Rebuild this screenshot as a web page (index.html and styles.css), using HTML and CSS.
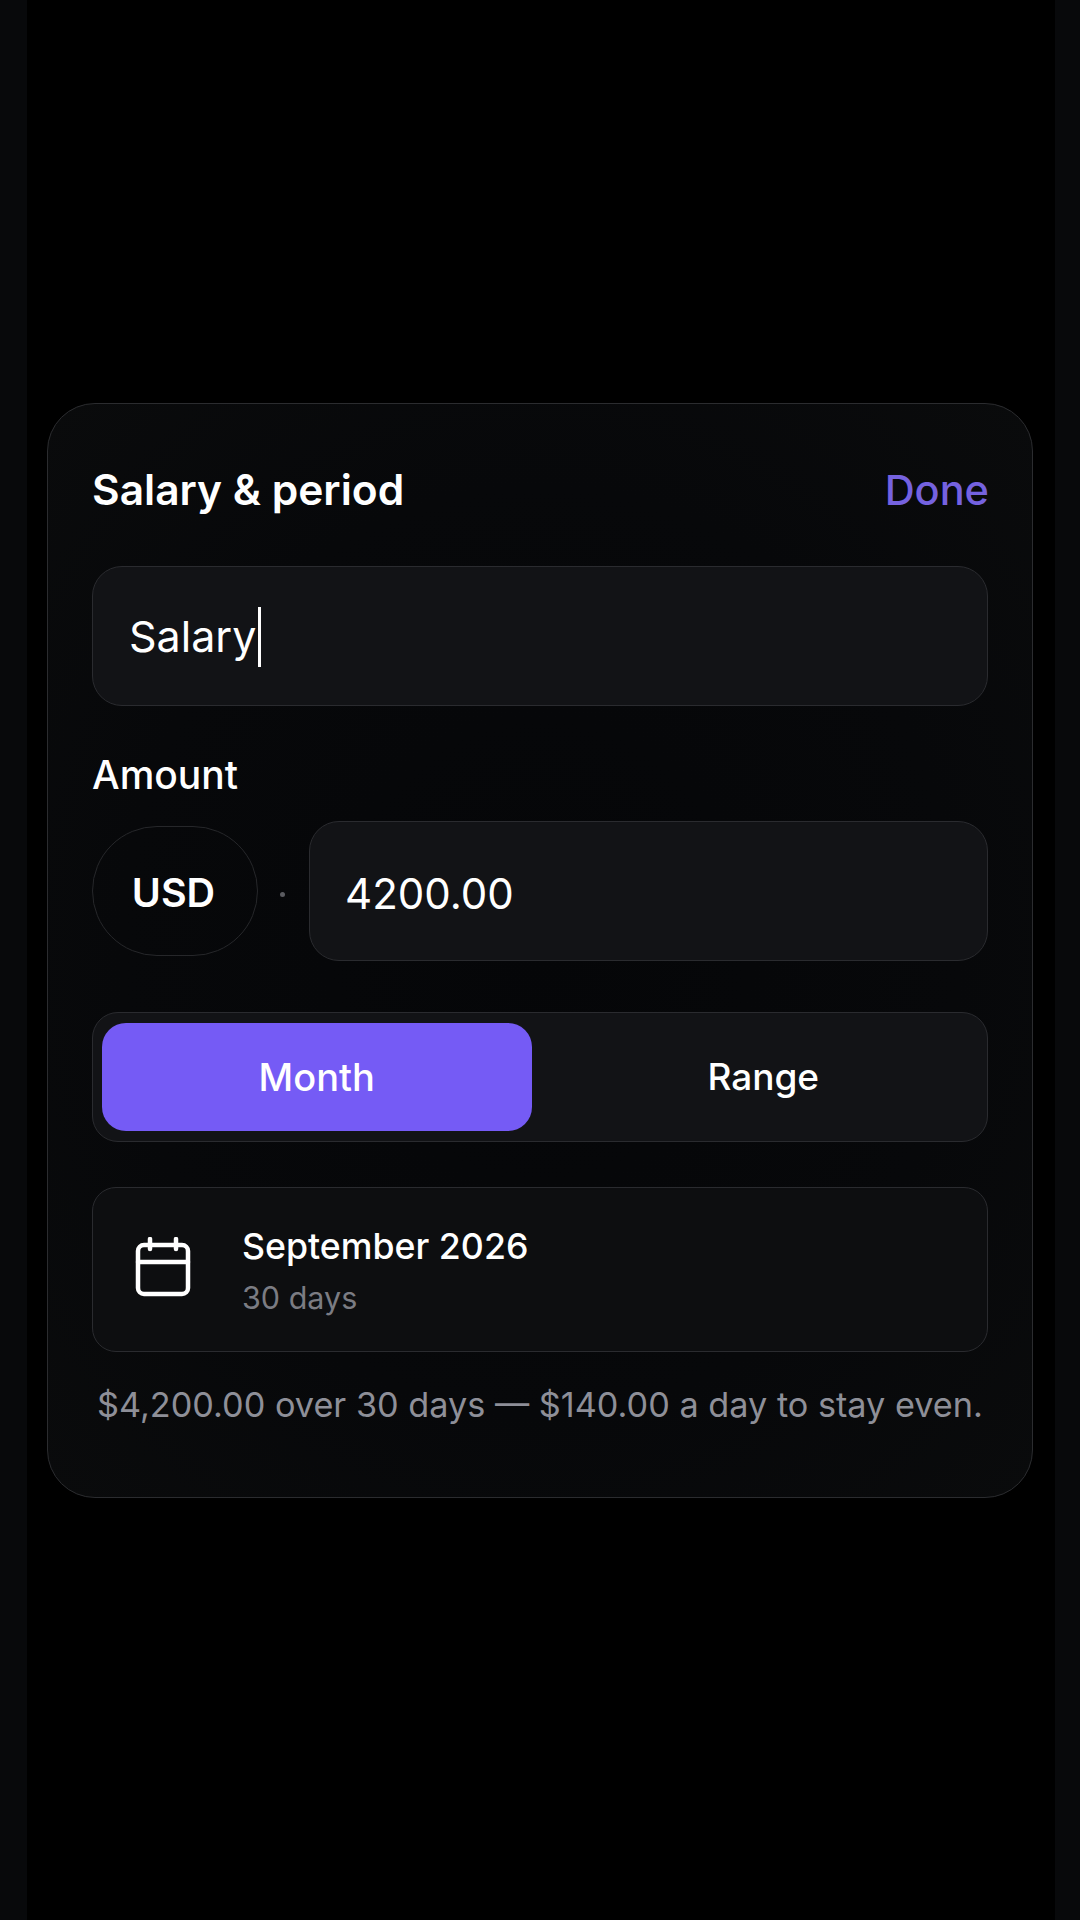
FILE: index.html
```html
<!DOCTYPE html>
<html lang="en">
<head>
    <meta charset="UTF-8">
    <meta name="viewport" content="width=device-width, initial-scale=1.0">
    <title>Salary &amp; period</title>
    <link rel="stylesheet" href="styles.css">
</head>
<body>
    <div class="scrim">
        <div class="sheet">
            <div class="sheet-head">
                <h1 class="sheet-title">Salary &amp; period</h1>
                <span class="done">Done</span>
            </div>

            <div class="field name-field">
                <span>Salary</span><span class="caret"></span>
            </div>

            <div class="amount-label">Amount</div>
            <div class="amount-row">
                <div class="currency">USD</div>
                <span class="dot"></span>
                <div class="field amount-field">4200.00</div>
            </div>

            <div class="segment">
                <div class="seg-item active">Month</div>
                <div class="seg-item range">Range</div>
            </div>

            <div class="period">
                <svg class="cal-icon" viewBox="0 0 56 60" fill="none" stroke="#fff" stroke-width="4.5" stroke-linecap="round" stroke-linejoin="round">
                    <rect x="3" y="8" width="50" height="49" rx="6"/>
                    <path d="M3 25H53"/>
                    <path d="M15 2V12"/>
                    <path d="M41 2V12"/>
                </svg>
                <div class="period-text">
                    <div class="period-name">September 2026</div>
                    <div class="period-days">30 days</div>
                </div>
            </div>

            <p class="summary">$4,200.00 over 30 days — $140.00 a day to stay even.</p>
        </div>
    </div>
</body>
</html>
```

FILE: styles.css
```css
*{
    box-sizing: border-box;
}
html,body{
    height: 100%;
}
body{
    margin: 0;
    background: #08090b;
    font-family: "Inter", "Liberation Sans", sans-serif;
    color: #fff;
}
.scrim{
    height: 100%;
    margin: 0 25px 0 27px;
    padding: 403px 22px 0 20px;
    background: #000;
}
.sheet{
    height: 1095px;
    padding: 0 44px;
    border: 1.5px solid #2b2c2f;
    border-radius: 48px;
    background: radial-gradient(ellipse at 50% 50%, #050608 0%, #07080a 60%, #0a0b0c 100%);
}
.sheet-head{
    display: flex;
    justify-content: space-between;
    align-items: center;
    height: 161.5px;
    padding-top: 28px;
    padding-bottom: 18px;
}
.sheet-title{
    margin: 0;
    font-size: 42.5px;
    font-weight: 600;
}
.done{
    margin-right: -1px;
    font-size: 41.5px;
    font-weight: 500;
    color: #7562e0;
}
.field{
    display: flex;
    align-items: center;
    border: 1.5px solid #2a2b2f;
    border-radius: 30px;
    background: #121316;
}
.name-field{
    height: 140px;
    padding-left: 36px;
    font-size: 43px;
}
.caret{
    width: 2.5px;
    height: 60px;
    margin: 3px 0 0 2px;
    background: #fff;
}
.amount-label{
    margin-top: 46px;
    font-size: 39px;
    font-weight: 500;
    line-height: 46px;
}
.amount-row{
    display: flex;
    align-items: center;
    margin-top: 23px;
}
.currency{
    display: flex;
    justify-content: center;
    align-items: center;
    width: 166px;
    height: 130px;
    margin-top: 1px;
    padding: 3px 3px 0 0;
    border: 1.5px solid #26272a;
    border-radius: 65px;
    font-size: 39.5px;
    font-weight: 600;
}
.dot{
    width: 5px;
    height: 5px;
    margin: 7px 24px 0 22px;
    border-radius: 50%;
    background: #5a5b60;
}
.amount-field{
    flex: 1;
    height: 140px;
    padding: 5px 0 0 35px;
    font-size: 42px;
}
.segment{
    display: grid;
    grid-template-columns: 1fr 1fr;
    gap: 16px;
    height: 130px;
    margin-top: 51px;
    padding: 10px 10px 10px 9px;
    border: 1.5px solid #2a2b2f;
    border-radius: 26px;
    background: #121316;
}
.seg-item{
    display: flex;
    justify-content: center;
    align-items: center;
    border-radius: 24px;
    font-size: 38px;
    font-weight: 500;
}
.seg-item.active{
    background: #755bf5;
}
.seg-item.range{
    padding-left: 2px;
    font-size: 37px;
}
.period{
    display: flex;
    align-items: center;
    height: 165px;
    margin-top: 45px;
    padding-left: 42px;
    border: 1.5px solid #2a2b2f;
    border-radius: 24px;
    background: #0d0e10;
}
.cal-icon{
    width: 56px;
    height: 60px;
    margin-bottom: 4px;
}
.period-text{
    margin-left: 51px;
    padding-top: 2px;
}
.period-name{
    font-size: 35.7px;
    font-weight: 500;
    line-height: 46px;
}
.period-days{
    margin-top: 9px;
    font-size: 30.5px;
    line-height: 40px;
    color: #7b7c83;
}
.summary{
    margin: 32px 0 0;
    text-align: center;
    font-size: 34.25px;
    color: #8e8f98;
    white-space: nowrap;
}
```
